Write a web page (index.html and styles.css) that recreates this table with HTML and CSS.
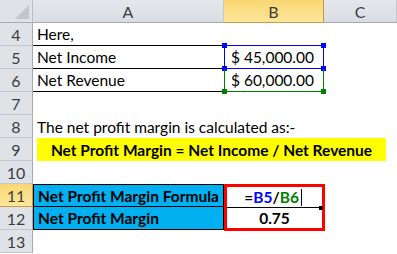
FILE: index.html
```html
<!DOCTYPE html>
<html>
<head>
<meta charset="utf-8">
<link rel="stylesheet" href="styles.css">
</head>
<body>
<div class="sheet">
  <div class="corner"><span class="tri"></span></div>
  <div class="colhead">A</div>
  <div class="colhead sel">B</div>
  <div class="colhead">C</div>

  <div class="rowhead">4</div>
  <div class="cell txt bb">Here,</div>
  <div class="cell"></div>
  <div class="cell"></div>

  <div class="rowhead">5</div>
  <div class="cell txt bb">Net Income</div>
  <div class="cell money ref-blue"><span>$</span><span>45,000.00</span>
    <i class="h h-tl b"></i><i class="h h-tr b"></i><i class="h h-bl b"></i><i class="h h-br b"></i></div>
  <div class="cell"></div>

  <div class="rowhead">6</div>
  <div class="cell txt bb">Net Revenue</div>
  <div class="cell money ref-green"><span>$</span><span>60,000.00</span>
    <i class="h h-bl g"></i><i class="h h-br g"></i></div>
  <div class="cell"></div>

  <div class="rowhead">7</div>
  <div class="cell"></div>
  <div class="cell"></div>
  <div class="cell"></div>

  <div class="rowhead">8</div>
  <div class="cell txt span3">The net profit margin is calculated as:-</div>

  <div class="rowhead">9</div>
  <div class="cell span3 hlwrap"><div class="hl">Net Profit Margin = Net Income / Net Revenue</div></div>

  <div class="rowhead">10</div>
  <div class="cell"></div>
  <div class="cell"></div>
  <div class="cell"></div>

  <div class="rowhead sel">11</div>
  <div class="cell txt blue bold b-top b-left b-right b-bot">Net Profit Margin Formula</div>
  <div class="result">
    <div class="formula"><span class="k">=</span><span class="fb">B5</span><span class="k">/</span><span class="fg">B6</span><span class="caret"></span></div>
    <div class="value">0.75</div>
    <i class="dot"></i>
  </div>
  <div class="cell"></div>

  <div class="rowhead">12</div>
  <div class="cell txt blue bold b-left b-right b-bot">Net Profit Margin</div>
  <div class="cell"></div>

  <div class="rowhead">13</div>
  <div class="cell"></div>
  <div class="cell"></div>
  <div class="cell"></div>
</div>
</body>
</html>
```
FILE: styles.css
```css
html, body {
  margin: 0;
  padding: 0;
  background: #fff;
}
body {
  font-family: "Lato", "Liberation Sans", sans-serif;
  font-size: 15.5px;
  color: #000;
}
.sheet {
  display: grid;
  grid-template-columns: 33px 191px 100px 73px;
  grid-template-rows: repeat(11, 23px);
  width: 397px;
  height: 254px;
  overflow: hidden;
}
.corner {
  background: #dfe3e8;
  border-right: 1px solid #b9bec4;
  border-bottom: 1px solid #a6abb2;
  position: relative;
}
.tri {
  position: absolute;
  right: 3px;
  bottom: 3px;
  width: 0;
  height: 0;
  border-left: 14px solid transparent;
  border-bottom: 14px solid #c2c6cb;
}
.colhead {
  background: linear-gradient(#e4e7eb, #dadee3);
  border-bottom: 1px solid #a6abb2;
  border-right: 1px solid #c5c9ce;
  color: #3d3d3d;
  display: flex;
  align-items: center;
  justify-content: center;
  font-size: 16px;
}
.colhead.sel, .rowhead.sel {
  background: linear-gradient(#f9d772, #fde79a);
  border-right: 1px solid #c99a4a;
  border-bottom: 1px solid #c99a4a;
}
.rowhead {
  background: #dfe3e8;
  border-right: 1px solid #a6abb2;
  border-bottom: 1px solid #c3c7cc;
  color: #3d3d3d;
  display: flex;
  align-items: center;
  justify-content: center;
  font-size: 16px;
}
.cell {
  position: relative;
  display: flex;
  align-items: center;
  white-space: nowrap;
}
.txt {
  padding-left: 4px;
}
.bb {
  border-bottom: 1px solid #000;
}
.span3 {
  grid-column: 2 / 5;
}
.money {
  justify-content: flex-end;
  gap: 4px;
  padding: 0 9px 0 0;
}
.ref-blue {
  border: 1px solid #0000ff;
  margin-top: -1px;
}
.ref-green {
  border: 1px solid #008000;
  border-top: none;
}
.h {
  position: absolute;
  width: 5px;
  height: 5px;
}
.h.b { background: #0000ff; }
.h.g { background: #008000; }
.h-tl { left: -3px; top: -3px; }
.h-tr { right: -3px; top: -3px; }
.h-bl { left: -3px; bottom: -3px; }
.h-br { right: -3px; bottom: -3px; }
.hlwrap {
  padding-left: 4px;
}
.hl {
  background: #ffff00;
  font-weight: bold;
  width: 349px;
  height: 23px;
  display: flex;
  align-items: center;
  justify-content: center;
}
.bold {
  font-weight: bold;
}
.blue {
  background: #00b0f0;
}
.b-top { border-top: 1px solid #000; }
.b-left { border-left: 1px solid #000; }
.b-right { border-right: 1px solid #000; }
.b-bot { border-bottom: 1px solid #000; }
.result {
  grid-column: 3;
  grid-row: 9 / 11;
  position: relative;
  border: 3px solid #ff0000;
  margin: 0 -1px -1px 0;
  display: grid;
  grid-template-rows: 21px 1fr;
  font-weight: bold;
}
.formula {
  display: flex;
  align-items: center;
  justify-content: flex-end;
  padding-right: 20px;
  border-bottom: 1px solid #000;
}
.k { color: #000; }
.fb { color: #0000ff; }
.fg { color: #008000; }
.caret {
  display: inline-block;
  width: 1px;
  height: 17px;
  background: #000;
  margin-left: 2px;
}
.value {
  display: flex;
  align-items: center;
  justify-content: center;
}
.dot {
  position: absolute;
  right: -1px;
  top: 19px;
  width: 4px;
  height: 4px;
  background: #000;
}
```
